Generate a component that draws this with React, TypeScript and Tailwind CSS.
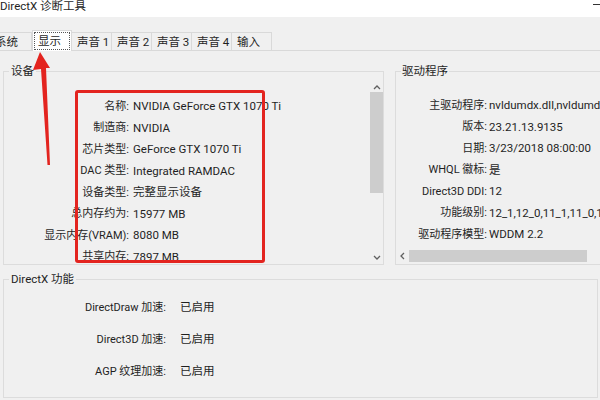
import React from "react";

const deviceRows: [string, string][] = [
  ["名称:", "NVIDIA GeForce GTX 1070 Ti"],
  ["制造商:", "NVIDIA"],
  ["芯片类型:", "GeForce GTX 1070 Ti"],
  ["DAC 类型:", "Integrated RAMDAC"],
  ["设备类型:", "完整显示设备"],
  ["总内存约为:", "15977 MB"],
  ["显示内存(VRAM):", "8080 MB"],
  ["共享内存:", "7897 MB"],
];

const driverRows: [string, string][] = [
  ["主驱动程序:", "nvldumdx.dll,nvldumdx.dll,nvldumdx.dll,nvldumdx.dll"],
  ["版本:", "23.21.13.9135"],
  ["日期:", "3/23/2018 08:00:00"],
  ["WHQL 徽标:", "是"],
  ["Direct3D DDI:", "12"],
  ["功能级别:", "12_1,12_0,11_1,11_0,10_1,10_0,9_3,9_2,9_1"],
  ["驱动程序模型:", "WDDM 2.2"],
];

const featureRows: [string, string][] = [
  ["DirectDraw 加速:", "已启用"],
  ["Direct3D 加速:", "已启用"],
  ["AGP 纹理加速:", "已启用"],
];

const tabs = ["系统", "显示", "声音 1", "声音 2", "声音 3", "声音 4", "输入"];

function Chevron({ dir }: { dir: "up" | "down" | "left" }) {
  const d =
    dir === "up" ? "M1 5 L4 2 L7 5" : dir === "down" ? "M1 2 L4 5 L7 2" : "M5 1 L2 4 L5 7";
  return (
    <svg width="8" height="8" viewBox="0 0 8 8" className="block">
      <path d={d} fill="none" stroke="#606060" strokeWidth="1.3" />
    </svg>
  );
}

export default function App() {
  return (
    <div
      className="relative w-[600px] h-[400px] overflow-hidden bg-[#f0f0f0] text-[#1f1f1f] text-[11.5px]"
      style={{ fontFamily: 'Roboto, "Noto Sans CJK SC", sans-serif' }}
    >
      {/* title bar */}
      <div className="h-[17px] bg-white flex items-start">
        <span className="leading-[13px]">DirectX 诊断工具</span>
        <span className="ml-auto mt-[4px] w-[7px] h-[1px] bg-[#333]" />
      </div>

      {/* tabs */}
      <div className="mt-[13px] h-[21px] flex items-end">
        {tabs.map((t, i) =>
          i === 1 ? (
            <div key={t} className="w-[40px] h-[21px] shrink-0 bg-white border-x border-t border-[#d9d9d9] p-[1px]">
              <div className="h-full border border-dotted border-[#555] pl-[3px] leading-[17px]">{t}</div>
            </div>
          ) : (
            <div
              key={t}
              className={`w-[40px] h-[19px] shrink-0 border-t border-b border-r border-[#d9d9d9] leading-[18px] whitespace-nowrap ${
                i === 0 ? "-ml-[8px] pl-[3px]" : "pl-[5px]"
              }`}
            >
              {t}
            </div>
          )
        )}
        <div className="flex-1 border-b border-[#d9d9d9]" />
      </div>

      {/* device + driver */}
      <div className="mt-[14px] flex">
        <fieldset className="ml-[3px] w-[381px] h-[200px] shrink-0 border border-[#dcdcdc]">
          <legend className="ml-[5px] px-[2px] leading-[12px]">设备</legend>
          <div className="mt-[5px] h-[181px] flex">
            <div className="flex-1 overflow-hidden pt-[14px]">
              {deviceRows.map(([k, v]) => (
                <div key={k} className="h-[21.5px] flex items-center whitespace-nowrap">
                  <span className="w-[125px] text-right shrink-0 text-[11px]">{k}</span>
                  <span className="pl-[4px]">{v}</span>
                </div>
              ))}
            </div>
            <div className="w-[13px] flex flex-col items-center">
              <div className="h-[10px] flex items-center pt-[1px]">
                <Chevron dir="up" />
              </div>
              <div className="w-full h-[101px] bg-[#cdcdcd]" />
              <div className="flex-1" />
              <div className="h-[10px] flex items-center">
                <Chevron dir="down" />
              </div>
            </div>
          </div>
        </fieldset>

        <fieldset className="ml-[11px] w-[220px] h-[200px] shrink-0 border border-[#dcdcdc]">
          <legend className="ml-[5px] px-[1px] leading-[12px]">驱动程序</legend>
          <div className="h-[187px] flex flex-col">
            <div className="flex-1 overflow-hidden pt-[18px]">
              {driverRows.map(([k, v]) => (
                <div key={k} className="h-[21.5px] flex items-center whitespace-nowrap">
                  <span className="w-[91px] text-right shrink-0 text-[11px]">{k}</span>
                  <span className="pl-[2px]">{v}</span>
                </div>
              ))}
            </div>
            <div className="h-[12px] mb-[2px] flex items-center">
              <div className="w-[13px] flex justify-center">
                <Chevron dir="left" />
              </div>
              <div className="w-[178px] h-full bg-[#cdcdcd]" />
            </div>
          </div>
        </fieldset>
      </div>

      {/* DirectX features */}
      <fieldset className="mt-[8px] ml-[3px] w-[595px] h-[125px] border border-[#dcdcdc]">
        <legend className="ml-[5px] px-[2px] leading-[12px]">DirectX 功能</legend>
        <div className="pt-[7px]">
          {featureRows.map(([k, v]) => (
            <div key={k} className="h-[32px] flex items-center whitespace-nowrap">
              <span className="w-[162px] text-right shrink-0 text-[11px]">{k}</span>
              <span className="pl-[14px]">{v}</span>
            </div>
          ))}
        </div>
      </fieldset>

      {/* annotation overlays */}
      <div className="absolute left-[75px] top-[90px] w-[190px] h-[173px] border-[3px] border-[#e3241f] rounded-[3px]" />
      <svg className="absolute left-0 top-0" width="60" height="170" viewBox="0 0 60 170">
        <polygon points="40,52 50,68 46,68 50,165 47.5,165 41,69 33,70" fill="#e3241f" />
      </svg>
    </div>
  );
}
